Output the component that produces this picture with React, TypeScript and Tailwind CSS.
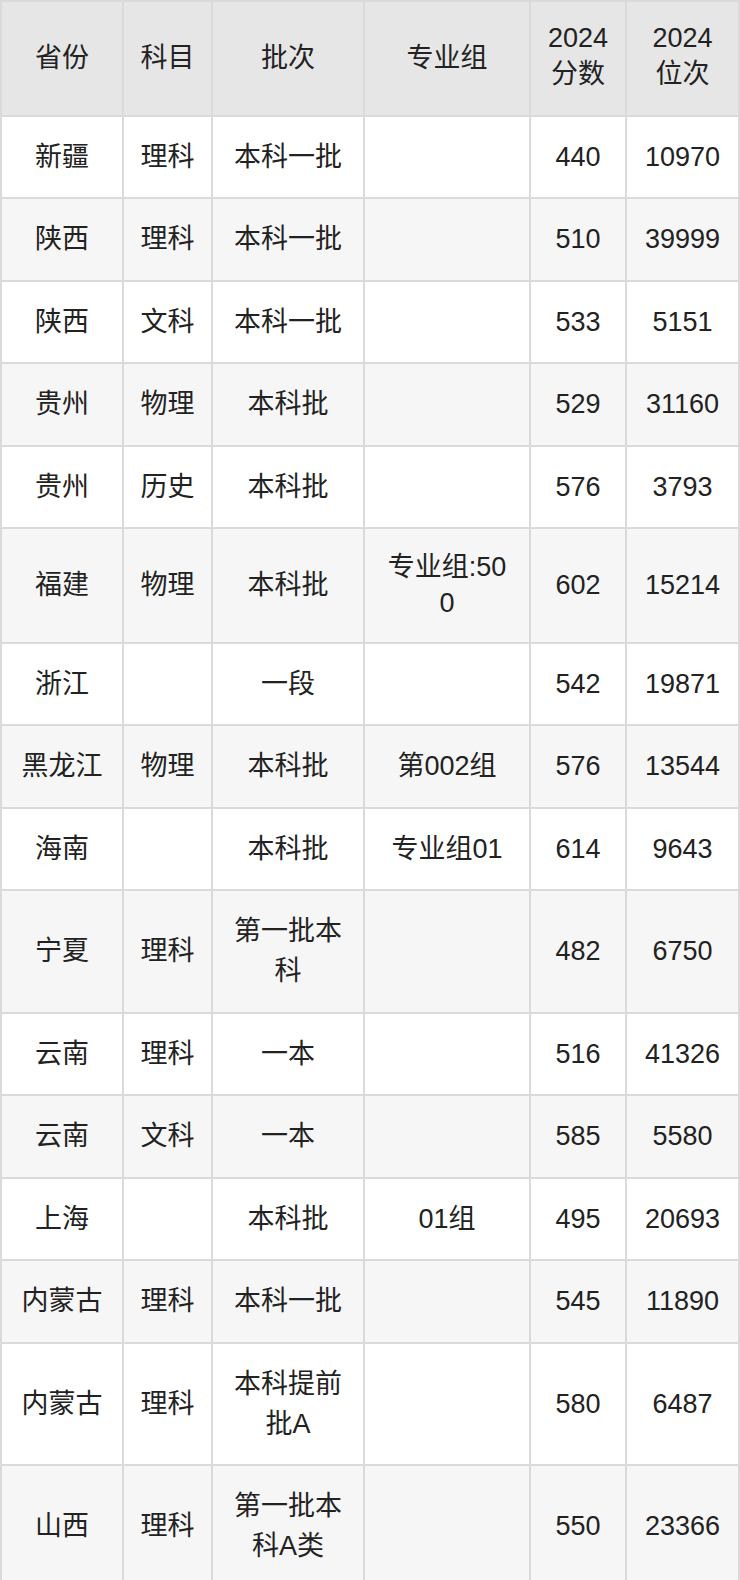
const rows = [
  ["新疆", "理科", "本科一批", "", "440", "10970"],
  ["陕西", "理科", "本科一批", "", "510", "39999"],
  ["陕西", "文科", "本科一批", "", "533", "5151"],
  ["贵州", "物理", "本科批", "", "529", "31160"],
  ["贵州", "历史", "本科批", "", "576", "3793"],
  ["福建", "物理", "本科批", "专业组:500", "602", "15214"],
  ["浙江", "", "一段", "", "542", "19871"],
  ["黑龙江", "物理", "本科批", "第002组", "576", "13544"],
  ["海南", "", "本科批", "专业组01", "614", "9643"],
  ["宁夏", "理科", "第一批本科", "", "482", "6750"],
  ["云南", "理科", "一本", "", "516", "41326"],
  ["云南", "文科", "一本", "", "585", "5580"],
  ["上海", "", "本科批", "01组", "495", "20693"],
  ["内蒙古", "理科", "本科一批", "", "545", "11890"],
  ["内蒙古", "理科", "本科提前批A", "", "580", "6487"],
  ["山西", "理科", "第一批本科A类", "", "550", "23366"],
];

const headers: [string, string?][] = [["省份"], ["科目"], ["批次"], ["专业组"], ["2024", "分数"], ["2024", "位次"]];
const widths = ["w-[122px]", "w-[89px]", "w-[152px]", "w-[166px]", "w-[96px]", "w-[113px]"];
const pads = ["px-4", "px-2", "px-5", "px-5 break-all", "px-2", "px-2"];

export default function App() {
  return (
    <div className="w-[740px] bg-white font-['Liberation_Sans','Noto_Sans_CJK_SC',sans-serif] text-[27px] leading-[40px] text-[#222]">
      <table className="w-[738px] table-fixed border-collapse border-2 border-[#dadada]">
        <thead>
          <tr className="bg-[#e6e6e6]">
            {headers.map(([a, b], i) => (
              <th key={i} className={`${widths[i]} ${pads[i]} py-[20.25px] border-2 border-[#dadada] text-center font-normal`}>
                {b ? (
                  <>
                    <span className="block leading-[32px]">{a}</span>
                    <span className="block">{b}</span>
                  </>
                ) : (
                  a
                )}
              </th>
            ))}
          </tr>
        </thead>
        <tbody>
          {rows.map((r, ri) => (
            <tr key={ri} className={ri % 2 === 1 ? "bg-[#f6f6f6]" : "bg-white"}>
              {r.map((c, ci) => (
                <td
                  key={ci}
                  className={`${pads[ci]} py-[20.25px] border-2 border-[#dadada] text-center ${c.includes(":") ? "leading-[36px]" : ""}`}
                >
                  {c}
                </td>
              ))}
            </tr>
          ))}
        </tbody>
      </table>
    </div>
  );
}
